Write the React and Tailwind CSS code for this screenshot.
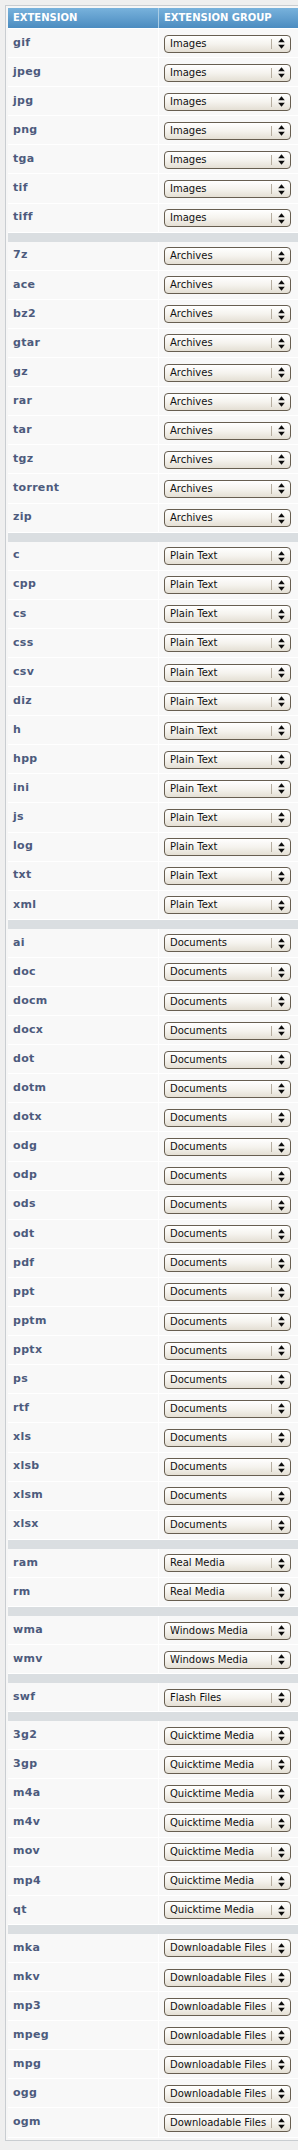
import React from "react";

const groups = [
  { label: "Images", items: ["gif", "jpeg", "jpg", "png", "tga", "tif", "tiff"] },
  { label: "Archives", items: ["7z", "ace", "bz2", "gtar", "gz", "rar", "tar", "tgz", "torrent", "zip"] },
  { label: "Plain Text", items: ["c", "cpp", "cs", "css", "csv", "diz", "h", "hpp", "ini", "js", "log", "txt", "xml"] },
  {
    label: "Documents",
    items: ["ai", "doc", "docm", "docx", "dot", "dotm", "dotx", "odg", "odp", "ods", "odt", "pdf", "ppt", "pptm", "pptx", "ps", "rtf", "xls", "xlsb", "xlsm", "xlsx"],
  },
  { label: "Real Media", items: ["ram", "rm"] },
  { label: "Windows Media", items: ["wma", "wmv"] },
  { label: "Flash Files", items: ["swf"] },
  { label: "Quicktime Media", items: ["3g2", "3gp", "m4a", "m4v", "mov", "mp4", "qt"] },
  { label: "Downloadable Files", items: ["mka", "mkv", "mp3", "mpeg", "mpg", "ogg", "ogm"] },
];

function Arrows() {
  return (
    <svg width="7" height="11" viewBox="0 0 7 11" className="block">
      <path d="M3.5 0.3 L6.8 4.2 L0.2 4.2 Z" fill="#0d0d0d" />
      <path d="M0.2 6.8 L6.8 6.8 L3.5 10.7 Z" fill="#0d0d0d" />
    </svg>
  );
}

function Select({ label }) {
  return (
    <div className="flex h-[18px] w-[127px] items-center rounded-[4px] border border-[#675e50] bg-gradient-to-b from-[#ffffff] via-[#f5f3ee] to-[#e4dfd4] shadow-[inset_0_1px_0_#ffffff]">
      <div className="flex-1 whitespace-nowrap pl-[5px] text-[10px] leading-none text-[#111]">{label}</div>
      <div className="h-[10px] w-px bg-[#b5ad9f]" />
      <div className="flex w-[18px] items-center justify-center">
        <Arrows />
      </div>
    </div>
  );
}

export default function App() {
  return (
    <div className="min-h-[2150px] w-[298px] overflow-hidden bg-[#efefef] pt-[5px] pl-[5px]" style={{ fontFamily: '"DejaVu Sans", Verdana, sans-serif' }}>
      <div className="w-[330px] border border-[#c9cdd1] bg-[#f6f6f6] p-[2px]">
        <div className="flex h-[21px] border-b border-white bg-gradient-to-b from-[#78b2dc] to-[#4b8cc0] text-[10px] font-bold leading-none text-white">
          <div className="flex w-[151px] items-center border-r border-[#a9cde6] pl-[5px]">EXTENSION</div>
          <div className="flex flex-1 items-center pl-[5px]">EXTENSION GROUP</div>
        </div>
        {groups.map((g, gi) => (
          <div key={g.label}>
            {gi > 0 && <div className="h-[9px] bg-[#dadee1]" />}
            {g.items.map((ext) => (
              <div key={ext} className="flex h-[29.1px] border-b border-white bg-[#f8f8f8]">
                <div className="flex w-[151px] items-center border-r border-white pl-[5px] text-[11px] font-bold tracking-[0.3px] text-[#4d5b7d]">
                  {ext}
                </div>
                <div className="flex flex-1 items-center pl-[5px] pt-px">
                  <Select label={g.label} />
                </div>
              </div>
            ))}
          </div>
        ))}
      </div>
    </div>
  );
}
